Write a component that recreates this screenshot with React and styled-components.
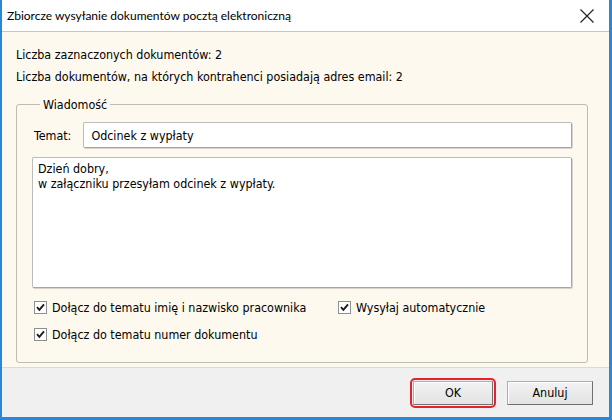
import React from "react";
import styled, { createGlobalStyle } from "styled-components";

const GlobalStyle = createGlobalStyle`
  html, body {
    margin: 0;
    padding: 0;
    width: 612px;
    height: 420px;
    overflow: hidden;
    background: #ffffff;
  }
  * {
    box-sizing: border-box;
  }
`;

const uiFont = `"DejaVu Sans Condensed", "DejaVu Sans", sans-serif`;
const titleFont = `Lato, "Noto Sans", sans-serif`;
const fontSize = "12.4px";

function App() {
  return (
    <>
      <GlobalStyle />
      <Window>
        <TitleBar>
          <Title>Zbiorcze wysyłanie dokumentów pocztą elektroniczną</Title>
          <CloseButton aria-label="Zamknij">
            <svg width="16" height="16" viewBox="0 0 16 16">
              <path d="M1.5 1.5 L14.5 14.5 M14.5 1.5 L1.5 14.5" stroke="#222" strokeWidth="1.2" fill="none" />
            </svg>
          </CloseButton>
        </TitleBar>
        <Content>
          <InfoLine>Liczba zaznaczonych dokumentów: 2</InfoLine>
          <InfoLine>Liczba dokumentów, na których kontrahenci posiadają adres email: 2</InfoLine>
          <Group>
            <Legend>Wiadomość</Legend>
            <SubjectRow>
              <Label>Temat:</Label>
              <TextInput defaultValue="Odcinek z wypłaty" />
            </SubjectRow>
            <TextArea defaultValue={"Dzień dobry,\nw załączniku przesyłam odcinek z wypłaty."} />
            <Options>
              <Check checked label="Dołącz do tematu imię i nazwisko pracownika" />
              <Check checked label="Wysyłaj automatycznie" />
              <Check checked label="Dołącz do tematu numer dokumentu" />
            </Options>
          </Group>
        </Content>
        <Footer>
          <Highlight>
            <Button $width={80}>OK</Button>
          </Highlight>
          <Button $width={86}>Anuluj</Button>
        </Footer>
      </Window>
    </>
  );
}

function Check({ checked, label }) {
  return (
    <CheckLabel>
      <Box>
        {checked && (
          <svg width="9" height="9" viewBox="0 0 9 9">
            <path d="M1 4.2 L3.4 6.8 L8 1.4" stroke="#1a1a1a" strokeWidth="1.9" fill="none" />
          </svg>
        )}
      </Box>
      <span>{label}</span>
    </CheckLabel>
  );
}

const Window = styled.div`
  width: 612px;
  height: 420px;
  display: flex;
  flex-direction: column;
  border-left: 2px solid #2b86d6;
  border-right: 3px solid #2b86d6;
  border-bottom: 3px solid #2b86d6;
  background: #ffffff;
  font-family: ${uiFont};
  color: #000;
`;

const TitleBar = styled.div`
  height: 32px;
  display: flex;
  align-items: center;
  justify-content: space-between;
  padding: 0 14px 0 5px;
  background: #ffffff;
  border-bottom: 1px solid #c9c6bf;
`;

const Title = styled.div`
  font-family: ${titleFont};
  font-size: 12px;
  color: #000;
`;

const CloseButton = styled.div`
  width: 16px;
  height: 16px;
  display: flex;
`;

const Content = styled.div`
  flex: 1;
  background: #fef9ee;
  padding: 12px 21px 4px 14px;
  display: flex;
  flex-direction: column;
`;

const InfoLine = styled.div`
  font-size: ${fontSize};
  height: 22px;
  line-height: 22px;
`;

const Group = styled.fieldset`
  margin: 9px 0 0 0;
  padding: 10px 15px 0 15px;
  border: 1px solid #bfbcb6;
  border-radius: 3px;
  flex: 1;
  display: flex;
  flex-direction: column;
  min-width: 0;
`;

const Legend = styled.legend`
  font-size: ${fontSize};
  padding: 0 3px;
  margin-left: 8px;
`;

const SubjectRow = styled.div`
  display: flex;
  align-items: center;
  gap: 12px;
  padding-left: 2px;
`;

const Label = styled.span`
  font-size: ${fontSize};
`;

const fieldBorder = `
  border: 1px solid #bcbcbc;
  border-right-color: #a6a6a6;
  border-bottom-color: #a6a6a6;
  box-shadow: 1px 1px 0 #d6d3cc;
  border-radius: 2px;
  background: #ffffff;
  font-family: ${uiFont};
  font-size: ${fontSize};
  color: #000;
  outline: none;
`;

const TextInput = styled.input`
  ${fieldBorder}
  flex: 1;
  height: 26px;
  padding: 0 7px;
`;

const TextArea = styled.textarea`
  ${fieldBorder}
  margin-top: 9px;
  height: 131px;
  resize: none;
  padding: 3px 5px;
  line-height: 15px;
`;

const Options = styled.div`
  display: grid;
  grid-template-columns: 304px 1fr;
  row-gap: 10px;
  margin-top: 11px;
  padding-left: 2px;
`;

const CheckLabel = styled.label`
  display: flex;
  align-items: center;
  gap: 5px;
  font-size: ${fontSize};
  height: 17px;
`;

const Box = styled.span`
  width: 13px;
  height: 13px;
  border: 1px solid #8e8f8f;
  background: #ffffff;
  display: flex;
  align-items: center;
  justify-content: center;
`;

const Footer = styled.div`
  height: 50px;
  background: #f0f0f0;
  border-top: 1px solid #d9d9d9;
  display: flex;
  align-items: center;
  justify-content: flex-end;
  gap: 11px;
  padding: 0 16px 0 0;
`;

const Highlight = styled.div`
  border: 2px solid #e3222c;
  border-radius: 5px;
  padding: 1px;
  display: flex;
`;

const Button = styled.button`
  width: ${(p) => p.$width}px;
  height: 24px;
  font-family: ${uiFont};
  font-size: ${fontSize};
  color: #000;
  background: linear-gradient(#f2f2f2, #e3e3e3);
  border: 1px solid #adadad;
  border-right-color: #707070;
  border-bottom-color: #707070;
  box-shadow: inset 1px 1px 0 #ffffff;
  padding: 0;
`;

export default App;
